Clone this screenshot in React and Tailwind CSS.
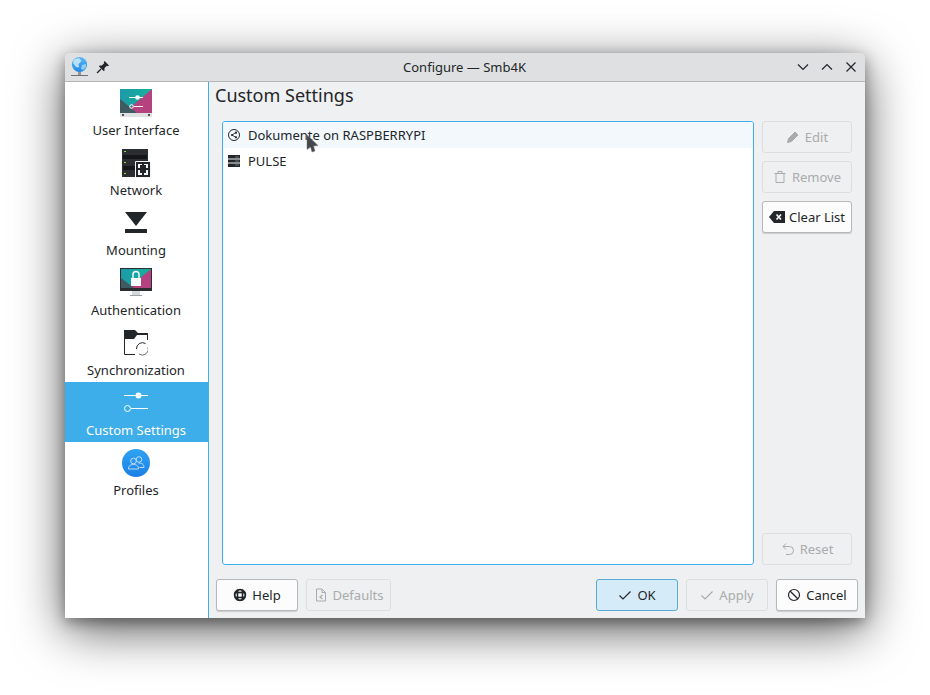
import React from "react";

const font = { fontFamily: '"Noto Sans", sans-serif' };

function Globe() {
  return (
    <svg width="20" height="22" viewBox="0 0 20 22" className="block">
      <defs>
        <linearGradient id="gl" x1="0" y1="0" x2="0" y2="1">
          <stop offset="0" stopColor="#5fbaf3" />
          <stop offset="1" stopColor="#1e88e5" />
        </linearGradient>
      </defs>
      <rect x="8" y="15" width="3" height="4" fill="#8d9699" />
      <circle cx="9.5" cy="8.5" r="7.6" fill="url(#gl)" />
      <path d="M4 3.5 L9 2 L11.5 5 L8.5 8 L9 11.5 L6 11 L3 7Z" fill="#d4ecfb" opacity="0.8" />
      <path d="M12 9 L16 8 L16 11 L13 14 L11 13Z" fill="#bfe2f8" opacity="0.7" />
      <rect x="1" y="19" width="17" height="1" fill="#6b7376" />
    </svg>
  );
}

function Pin() {
  return (
    <svg width="14" height="14" viewBox="0 0 14 14" className="block">
      <path d="M8.6 1 L13 5.4 L11.8 6.2 L10.8 5.8 L8.4 8.2 L8.6 10.4 L7.6 11 L3 6.4 L3.6 5.4 L5.8 5.6 L8.2 3.2 L7.8 2.2Z" fill="#232629" />
      <path d="M5 9 L1 13" stroke="#232629" strokeWidth="1.3" />
    </svg>
  );
}

function UiIcon() {
  return (
    <svg width="32" height="28" viewBox="0 0 32 28" className="block">
      <defs>
        <linearGradient id="ui1" x1="0" y1="0" x2="1" y2="0">
          <stop offset="0" stopColor="#1d99a8" />
          <stop offset="1" stopColor="#12b39a" />
        </linearGradient>
      </defs>
      <rect width="32" height="24" fill="url(#ui1)" />
      <path d="M32 0 V24 H4Z" fill="#b3427f" />
      <path d="M0 24 V10 L17 24Z" fill="#3f5a60" />
      <rect y="24" width="32" height="4" fill="#dfe2e3" />
      <rect x="28" y="25" width="2" height="2" fill="#4d4d4d" />
      <rect x="2" y="25" width="2" height="2" fill="#4d4d4d" />
      <path d="M9 8.5 H23 M14 17.5 H23" stroke="#fff" strokeWidth="1" />
      <circle cx="17.5" cy="8.5" r="2.3" fill="#fff" />
      <circle cx="11.5" cy="17.5" r="1.8" fill="none" stroke="#fff" strokeWidth="1" />
    </svg>
  );
}

function NetIcon() {
  return (
    <svg width="29" height="29" viewBox="0 0 29 29" className="block">
      <rect x="0" y="0" width="26" height="28" fill="#2b2e31" />
      <rect x="1" y="6" width="24" height="4" fill="#141618" />
      <rect x="1" y="17" width="24" height="4" fill="#141618" />
      <rect x="2" y="2" width="2" height="1" fill="#8fe03a" />
      <rect x="2" y="13" width="2" height="1" fill="#8fe03a" />
      <rect x="2" y="24" width="2" height="1" fill="#8fe03a" />
      <rect x="13" y="12" width="16" height="17" rx="1" fill="#f4f5f5" />
      <rect x="14" y="13" width="14" height="15" fill="#232629" />
      <path d="M16 15 H20 V16 H18 V19 H16Z M22 15 H26 V19 H24 V16 H22Z M16 21 H18 V24 H20 V26 H16Z M24 21 H26 V26 H22 V24 H24Z" fill="#f4f5f5" />
    </svg>
  );
}

function MountIcon() {
  return (
    <svg width="22" height="22" viewBox="0 0 22 22" className="block">
      <path d="M0 0 H22 L11 14Z" fill="#232629" />
      <rect y="17" width="22" height="4" fill="#232629" />
    </svg>
  );
}

function AuthIcon() {
  return (
    <svg width="32" height="30" viewBox="0 0 32 30" className="block">
      <defs>
        <linearGradient id="au1" x1="0" y1="0" x2="1" y2="0">
          <stop offset="0" stopColor="#1d99a8" />
          <stop offset="1" stopColor="#12b39a" />
        </linearGradient>
      </defs>
      <rect width="32" height="23" fill="#2b2e31" />
      <rect x="1" y="1" width="30" height="19" fill="url(#au1)" />
      <path d="M31 1 V20 H8Z" fill="#b3427f" />
      <path d="M1 20 V10 L14 20Z" fill="#3f5a60" />
      <rect x="12" y="23" width="8" height="4" fill="#d5d9da" />
      <rect x="10" y="27" width="12" height="1" fill="#9aa1a4" />
      <path d="M13 10 V6.5 A3 3 0 0 1 19 6.5 V10" fill="none" stroke="#fff" strokeWidth="1.4" />
      <rect x="11" y="10" width="10" height="8" fill="#fff" />
    </svg>
  );
}

function SyncIcon() {
  return (
    <svg width="24" height="26" viewBox="0 0 24 26" className="block">
      <path d="M0 0 H11 L14 3 H24 V5 H13 L10 9 H0Z" fill="#232629" />
      <path d="M0.5 6 V24.5 H11 M23.5 4 V10" fill="none" stroke="#232629" strokeWidth="1" />
      <path d="M12.5 19 A6 6 0 0 1 21.5 13.5" fill="none" stroke="#232629" strokeWidth="1" />
      <path d="M24 17 A6 6 0 0 1 15 24" fill="none" stroke="#6b6e70" strokeWidth="1" />
    </svg>
  );
}

function SlidersIcon() {
  return (
    <svg width="24" height="24" viewBox="0 0 24 24" className="block">
      <path d="M0 4.5 H24 M7 17.5 H24" stroke="#fff" strokeWidth="1" />
      <circle cx="14.5" cy="4.5" r="3" fill="#fff" />
      <circle cx="3.5" cy="17.5" r="3" fill="#3daee9" stroke="#fff" strokeWidth="1" />
    </svg>
  );
}

function ProfilesIcon() {
  return (
    <svg width="28" height="28" viewBox="0 0 28 28" className="block">
      <defs>
        <linearGradient id="pr1" x1="0" y1="0" x2="0" y2="1">
          <stop offset="0" stopColor="#2ea3f2" />
          <stop offset="1" stopColor="#1d7fe6" />
        </linearGradient>
      </defs>
      <circle cx="14" cy="14" r="14" fill="url(#pr1)" />
      <g fill="none" stroke="#cfe7fb" strokeWidth="0.9">
        <circle cx="11.5" cy="12" r="2.8" />
        <path d="M6.5 20 C6.5 16.5 9 15.5 11.5 15.5 C14 15.5 16.5 16.5 16.5 20Z" />
        <circle cx="17" cy="10.5" r="2.8" />
        <path d="M16.5 14 C19.5 14 22 15 22 18.5 H17.5" />
      </g>
    </svg>
  );
}

function ShareIcon() {
  return (
    <svg width="12" height="12" viewBox="0 0 12 12" className="block">
      <circle cx="6" cy="6" r="5.5" fill="none" stroke="#232629" strokeWidth="1" />
      <path d="M8 3.5 L4 6 L8 8.5" fill="none" stroke="#232629" strokeWidth="0.9" />
      <circle cx="8" cy="3.7" r="1.1" fill="#232629" />
      <circle cx="4" cy="6" r="1.1" fill="#232629" />
      <circle cx="8" cy="8.3" r="1.1" fill="#232629" />
    </svg>
  );
}

function ServerIcon() {
  return (
    <svg width="12" height="12" viewBox="0 0 12 12" className="block">
      <rect width="12" height="12" fill="#232629" />
      <rect y="3.5" width="12" height="1" fill="#eef1f3" />
      <rect y="7.5" width="12" height="1" fill="#eef1f3" />
      <rect x="7" y="1.5" width="4" height="1" fill="#6e7274" />
      <rect x="7" y="5.5" width="4" height="1" fill="#6e7274" />
      <rect x="7" y="9.5" width="4" height="1" fill="#6e7274" />
    </svg>
  );
}

const IC = ({ children, color, w = 14, h = 14 }) => (
  <svg width={w} height={h} viewBox={`0 0 ${w} ${h}`} fill="none" stroke={color} strokeWidth="1" className="block shrink-0">
    {children}
  </svg>
);

function Btn({ width, disabled, primary, icon, label }) {
  const tone = primary
    ? "border-[#5ba9d6] bg-[#d6ebf8] text-[#232629]"
    : disabled
      ? "border-[#dcdee0] bg-[#eff0f1] text-[#a9abad]"
      : "border-[#b6b8ba] bg-[#fcfcfc] text-[#232629] shadow-[0_1px_1px_rgba(0,0,0,0.15)]";
  return (
    <div className={`flex h-8 items-center justify-center gap-[5px] rounded-[3px] border text-[13px] ${tone} ${width}`}>
      {icon}
      <span className="pt-px">{label}</span>
    </div>
  );
}

function SideItem({ icon, label, active }) {
  return (
    <div className={`flex h-[60px] flex-col items-center pr-px ${active ? "bg-[#3daee9] text-[#fcfcfc]" : "text-[#232629]"}`}>
      <div className="flex h-[39px] w-full items-center justify-center pt-[3px]">{icon}</div>
      <div className="text-[13px] leading-[18px]">{label}</div>
    </div>
  );
}

export default function App() {
  const dis = "#a9abad";
  const dark = "#232629";
  return (
    <div className="h-[695px] w-[930px] overflow-hidden bg-white pl-[65px] pt-[53px]" style={font}>
      <div className="relative flex h-[565px] w-[800px] flex-col overflow-visible rounded-t-[5px] bg-[#eff0f1] shadow-[0_12px_50px_rgba(0,0,0,0.65),0_4px_14px_rgba(0,0,0,0.35)]">
        {/* Title bar */}
        <div className="flex h-[29px] shrink-0 items-center justify-between rounded-t-[5px] border-b border-[#b3b5b7] bg-[#dee0e2] pl-[5px] pr-[7px]">
          <div className="flex w-[100px] items-center gap-[6px]">
            <Globe />
            <Pin />
          </div>
          <div className="pl-px pt-px text-[13px] text-[#232629]">Configure — Smb4K</div>
          <div className="flex w-[100px] items-center justify-end gap-[10px]">
            <IC color={dark}><path d="M2 4.5 L7 9.5 L12 4.5" strokeWidth="1.2" /></IC>
            <IC color={dark}><path d="M2 9.5 L7 4.5 L12 9.5" strokeWidth="1.2" /></IC>
            <IC color={dark}><path d="M2.5 2.5 L11.5 11.5 M11.5 2.5 L2.5 11.5" strokeWidth="1.2" /></IC>
          </div>
        </div>
        <div className="flex min-h-0 flex-1">
          {/* Sidebar */}
          <div className="w-[144px] shrink-0 border-r border-[#3daee9] bg-white">
            <SideItem icon={<UiIcon />} label="User Interface" />
            <SideItem icon={<NetIcon />} label="Network" />
            <SideItem icon={<MountIcon />} label="Mounting" />
            <SideItem icon={<AuthIcon />} label="Authentication" />
            <SideItem icon={<SyncIcon />} label="Synchronization" />
            <SideItem icon={<SlidersIcon />} label="Custom Settings" active />
            <SideItem icon={<ProfilesIcon />} label="Profiles" />
          </div>
          {/* Main */}
          <div className="flex min-w-0 flex-1 flex-col pb-[7px] pl-[7px] pr-[7px]">
            <div className="-ml-px h-[39px] text-[18px] leading-[26px] text-[#232629]">Custom Settings</div>
            <div className="flex min-h-0 flex-1 gap-2 pl-[6px] pr-[6px]">
              <div className="w-[532px] overflow-hidden rounded-[3px] border border-[#3daee9] bg-white text-[13px] text-[#232629]">
                <div className="flex h-[26px] items-center gap-2 bg-[#f2f8fc] pl-[5px]">
                  <ShareIcon />
                  <span className="pt-px">Dokumente on RASPBERRYPI</span>
                </div>
                <div className="flex h-[26px] items-center gap-2 pl-[5px]">
                  <ServerIcon />
                  <span className="pt-px">PULSE</span>
                </div>
              </div>
              <div className="flex w-[90px] flex-col gap-2">
                <Btn disabled width="w-[90px]" label="Edit" icon={
                  <IC color={dis}><path d="M1.5 12.5 L2.5 8.5 L9 2 L12 5 L5.5 11.5Z" fill={dis} /></IC>
                } />
                <Btn disabled width="w-[90px]" label="Remove" icon={
                  <IC color={dis}><path d="M1.5 3.5 H12.5 M5 3.5 V1.5 H9 V3.5 M3 3.5 V12.5 H11 V3.5" /></IC>
                } />
                <Btn width="w-[90px]" label="Clear List" icon={
                  <svg width="16" height="12" viewBox="0 0 16 12" className="-mr-px block shrink-0">
                    <path d="M0 6 L5 0 H16 V12 H5Z" fill={dark} />
                    <path d="M7.5 3.5 L12 8.5 M12 3.5 L7.5 8.5" stroke="#fcfcfc" strokeWidth="1.6" />
                  </svg>
                } />
                <div className="flex-1" />
                <Btn disabled width="w-[90px]" label="Reset" icon={
                  <IC color={dis}><path d="M5 1.5 L2 4.5 L5 7.5 M2 4.5 H8.5 A3.8 3.8 0 0 1 8.5 12.5 H5" /></IC>
                } />
              </div>
            </div>
            {/* Bottom buttons */}
            <div className="mt-[14px] flex h-8 shrink-0 items-center">
              <Btn width="w-[82px]" label="Help" icon={
                <IC color={dark}>
                  <circle cx="7" cy="7" r="5.3" strokeWidth="1.8" />
                  <path d="M4.6 1.5 V12.5 M9.4 1.5 V12.5 M1.5 4.6 H12.5 M1.5 9.4 H12.5" strokeWidth="1.8" />
                  <rect x="5.5" y="5.5" width="3" height="3" fill="#fcfcfc" stroke="none" />
                </IC>
              } />
              <div className="w-2" />
              <Btn disabled width="w-[85px]" label="Defaults" icon={
                <IC color={dis}>
                  <path d="M2.5 1 H8 L11.5 4.5 V13 H2.5Z M8 1 V4.5 H11.5" />
                  <path d="M8.5 7 L6 9 L8.5 11" strokeWidth="1.2" />
                </IC>
              } />
              <div className="flex-1" />
              <Btn primary width="w-[82px]" label="OK" icon={
                <IC color={dark}><path d="M1.5 7.5 L5 11 L12.5 3.5" strokeWidth="1.2" /></IC>
              } />
              <div className="w-2" />
              <Btn disabled width="w-[82px]" label="Apply" icon={
                <IC color={dis}><path d="M1.5 7.5 L5 11 L12.5 3.5" strokeWidth="1.2" /></IC>
              } />
              <div className="w-2" />
              <Btn width="w-[82px]" label="Cancel" icon={
                <IC color={dark}>
                  <circle cx="7" cy="7" r="5.5" strokeWidth="1.2" />
                  <path d="M3 3 L11 11" strokeWidth="1.2" />
                </IC>
              } />
            </div>
          </div>
        </div>
        {/* Mouse cursor over the list */}
        <svg width="14" height="20" viewBox="0 0 14 20" className="absolute left-[241px] top-[81px]">
          <path d="M1 1 V15.5 L4.5 13 L6 18 L9 17 L7.5 12 L12 11.5Z" fill="#45474a" stroke="#77797b" strokeWidth="0.5" />
        </svg>
      </div>
    </div>
  );
}
